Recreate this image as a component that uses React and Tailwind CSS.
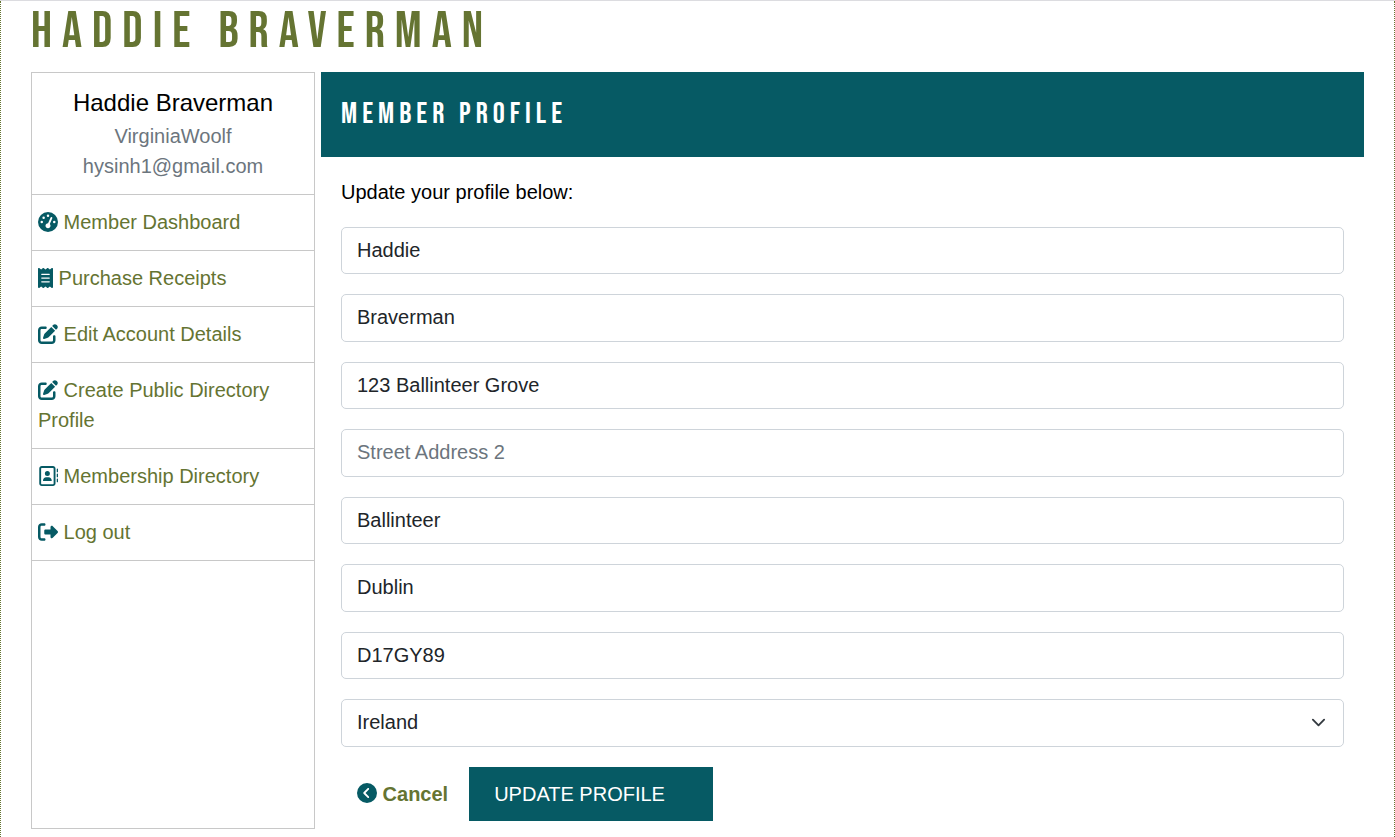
import { useState } from "react";
import {
  FaGaugeHigh,
  FaReceipt,
  FaPenToSquare,
  FaRegAddressBook,
  FaRightFromBracket,
  FaCircleChevronLeft,
} from "react-icons/fa6";

const display =
  "font-['Bebas_Neue','Liberation_Sans_Narrow','Liberation_Sans',sans-serif] font-normal uppercase";

const links = [
  { label: "Member Dashboard", Icon: FaGaugeHigh },
  { label: "Purchase Receipts", Icon: FaReceipt, narrow: true },
  { label: "Edit Account Details", Icon: FaPenToSquare },
  { label: "Create Public Directory Profile", Icon: FaPenToSquare },
  { label: "Membership Directory", Icon: FaRegAddressBook },
  { label: "Log out", Icon: FaRightFromBracket },
];

const fields = [
  { id: "first-name", label: "First Name", value: "Haddie" },
  { id: "last-name", label: "Last Name", value: "Braverman" },
  { id: "street-1", label: "Street Address", value: "123 Ballinteer Grove" },
  { id: "street-2", label: "Street Address 2", value: "" },
  { id: "city", label: "City", value: "Ballinteer" },
  { id: "county", label: "County", value: "Dublin" },
  { id: "postcode", label: "Postal Code", value: "D17GY89" },
];

const control =
  "block w-full rounded-[5px] border border-[#ced4da] bg-white px-[15px] py-[9px] text-xl leading-snug text-[#212529] placeholder:text-[#6c757d]";

function Sidebar() {
  return (
    <aside className="w-[284px] shrink-0 border border-[#c8c8c8]">
      <div className="border-b border-[#c8c8c8] pt-3 pb-[13px] text-center leading-[30px]">
        <div className="text-2xl leading-9 text-black">Haddie Braverman</div>
        <div className="text-[#6c757d]">VirginiaWoolf</div>
        <div className="text-[#6c757d]">hysinh1@gmail.com</div>
      </div>
      <nav>
        {links.map(({ label, Icon, narrow }) => (
          <a
            key={label}
            href="#"
            className="block border-b border-[#c8c8c8] px-[6px] pt-3 pb-[13px] leading-[30px] text-[#657432]"
          >
            <Icon
              className={
                narrow
                  ? "inline-block h-5 w-[15px] align-[-0.125em] text-[#065a64]"
                  : "inline-block size-5 align-[-0.125em] text-[#065a64]"
              }
            />{" "}
            {label}
          </a>
        ))}
      </nav>
    </aside>
  );
}

function Field({ field }) {
  const [value, setValue] = useState(field.value);
  return (
    <input
      id={field.id}
      type="text"
      aria-label={field.label}
      className={control}
      placeholder={field.label}
      value={value}
      onChange={(e) => setValue(e.target.value)}
    />
  );
}

function CountrySelect() {
  return (
    <div className="relative">
      <select
        id="country"
        aria-label="Country"
        defaultValue="Ireland"
        className={`${control} appearance-none`}
      >
        <option>Ireland</option>
      </select>
      <svg
        viewBox="0 0 16 16"
        className="pointer-events-none absolute inset-y-0 right-[18px] my-auto size-[15px]"
        fill="none"
        stroke="#343a40"
        strokeWidth="2"
        strokeLinecap="round"
        strokeLinejoin="round"
      >
        <path d="m2 5 6 6 6-6" />
      </svg>
    </div>
  );
}

export default function App() {
  return (
    <div className="border-t border-[#dcdce0] bg-white font-['Liberation_Sans',Arial,sans-serif] text-xl">
      <div className="border-x border-dotted border-[#657432] px-[30px] pb-2">
        <h1
          className={`${display} pt-[6px] pb-[15px] text-[50px] leading-[50px] tracking-[0.2em] text-[#657432]`}
        >
          Haddie Braverman
        </h1>
        <div className="flex gap-[6px]">
          <Sidebar />
          <main className="min-w-0 flex-1">
            <div className="bg-[#065a64] px-5 pt-[22px] pb-[23px]">
              <h2 className={`${display} text-3xl leading-10 tracking-[5px] text-white`}>
                Member Profile
              </h2>
            </div>
            <form className="px-5 pt-[22px] pb-2" onSubmit={(e) => e.preventDefault()}>
              <p className="pb-5 leading-snug text-black">Update your profile below:</p>
              <div className="flex flex-col gap-5">
                {fields.map((f) => (
                  <Field key={f.id} field={f} />
                ))}
                <CountrySelect />
                <div className="flex items-center gap-[21px] pl-4">
                  <a href="#" className="font-bold leading-[30px] text-[#657432]">
                    <FaCircleChevronLeft className="inline-block size-5 align-[-0.125em] text-[#065a64]" />{" "}
                    Cancel
                  </a>
                  <button
                    type="submit"
                    className="bg-[#065a64] py-3 pr-12 pl-[25px] leading-[30px] text-white"
                  >
                    UPDATE PROFILE
                  </button>
                </div>
              </div>
            </form>
          </main>
        </div>
      </div>
    </div>
  );
}
